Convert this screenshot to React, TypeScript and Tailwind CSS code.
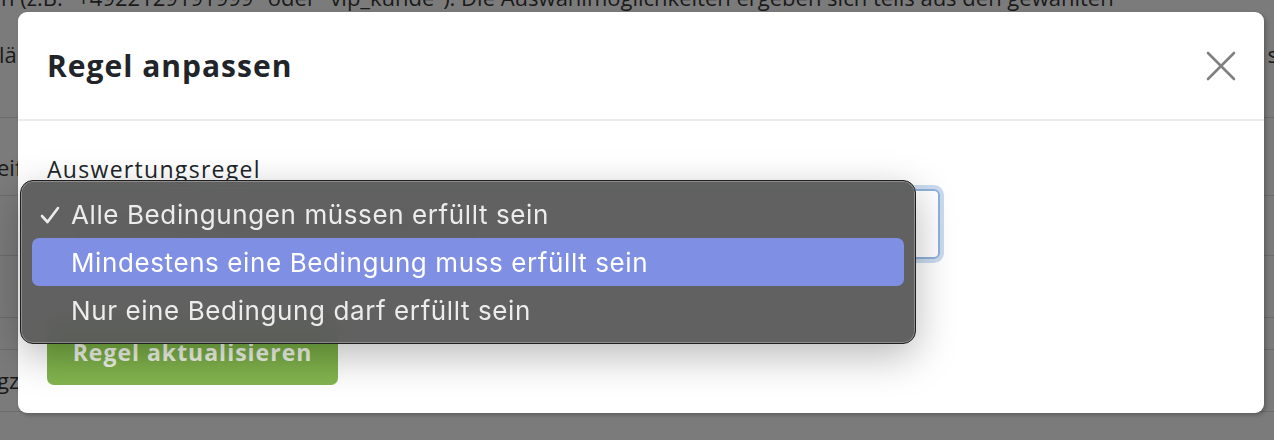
import React from "react";

const sans = { fontFamily: "'Open Sans', Lato, sans-serif" };
const sys = { fontFamily: "Inter, 'Liberation Sans', sans-serif" };

function CloseIcon() {
  return (
    <svg width="30" height="30" viewBox="0 0 30 30" fill="none" stroke="#808080" strokeWidth="2.6" strokeLinecap="round">
      <path d="M2 2 L28 28 M28 2 L2 28" />
    </svg>
  );
}

function Check() {
  return (
    <svg width="20" height="18" viewBox="0 0 20 18" fill="none" stroke="#ececec" strokeWidth="2.6" strokeLinecap="round" strokeLinejoin="round">
      <path d="M2 10 L7.5 16 L18 2" />
    </svg>
  );
}

export default function App() {
  return (
    <div className="relative h-[440px] w-full overflow-hidden bg-[#7b7b7b] text-[#1e1e1e]" style={sans}>
      {/* page behind the overlay */}
      <div className="flex flex-col text-[22px] text-[#1a1a1a]">
        <div className="-mt-[17px] h-[29px] whitespace-nowrap leading-[28px] pl-[1px]">
          n (z.B. "+4922129191999" oder "vip_kunde"). Die Auswahlmöglichkeiten ergeben sich teils aus den gewählten
        </div>
        <div className="flex h-[106px] items-center justify-between border-b border-[#6c6c6c] pb-[20px]">
          <span className="-ml-[1px]">lä</span>
          <span className="mr-[-4px]">s</span>
        </div>
        <div className="flex h-[78px] items-center border-b border-[#6c6c6c] pt-[22px]">
          <span className="-ml-[3px]">eif</span>
        </div>
        <div className="h-[60px] border-b border-[#6c6c6c]" />
        <div className="h-[62px] border-b border-[#6c6c6c]" />
        <div className="h-[32px] border-b border-[#6c6c6c]" />
        <div className="flex h-[62px] items-center border-b border-[#6c6c6c]">
          <span className="-ml-[3px]">gz</span>
        </div>
      </div>

      {/* modal */}
      <div className="absolute left-[18px] top-[12px] flex h-[401px] w-[1246px] flex-col rounded-[9px] bg-white shadow-[2px_2px_4px_rgba(0,0,0,0.25)]">
        <div className="flex h-[109px] items-center justify-between border-b-2 border-[#ececec] pl-[29px] pr-[28px]">
          <h2 className="text-[30px] font-bold tracking-[1px] text-[#212529]">Regel anpassen</h2>
          <CloseIcon />
        </div>
        <div className="relative flex flex-col pl-[29px] pt-[35px]">
          <label className="text-[23px] leading-[26px] tracking-[1.3px] text-[#212529]">Auswertungsregel</label>
          <div className="mt-[7px] flex h-[70px] w-[893px] items-center rounded-[6px] border-2 border-[#8fb1da] pl-[24px] text-[22px] font-bold text-[#333] shadow-[0_0_0_4px_rgba(160,190,225,0.55)]">
            Alle Bedingungen müssen erfüllt sein
          </div>
          <button className="mt-[60px] flex h-[66px] w-[291px] items-center justify-center rounded-[7px] bg-gradient-to-b from-[#74ad3f] to-[#84b450] text-[23px] font-bold tracking-[1px] text-[#f1f6ea]">
            Regel aktualisieren
          </button>

          {/* native popup menu */}
          <div
            className="absolute left-[2px] top-[59px] flex h-[164px] w-[896px] flex-col rounded-[13px] border border-[#1f1f1f] bg-[#5b5b5b]/[0.96] px-[11px] pt-[10px] text-[26px] tracking-[0.6px] text-[#ececec] shadow-[inset_0_0_0_1px_rgba(255,255,255,0.28),0_12px_40px_rgba(0,0,0,0.28)] backdrop-blur-md"
            style={sys}
          >
            <div className="flex h-[47px] items-center">
              <span className="flex w-[39px] pl-[8px]">
                <Check />
              </span>
              <span>Alle Bedingungen müssen erfüllt sein</span>
            </div>
            <div className="flex h-[48px] items-center rounded-[7px] bg-[#7f8fe3] pl-[39px] text-white">
              Mindestens eine Bedingung muss erfüllt sein
            </div>
            <div className="flex h-[48px] items-center pl-[39px]">
              Nur eine Bedingung darf erfüllt sein
            </div>
          </div>
        </div>
      </div>
    </div>
  );
}
